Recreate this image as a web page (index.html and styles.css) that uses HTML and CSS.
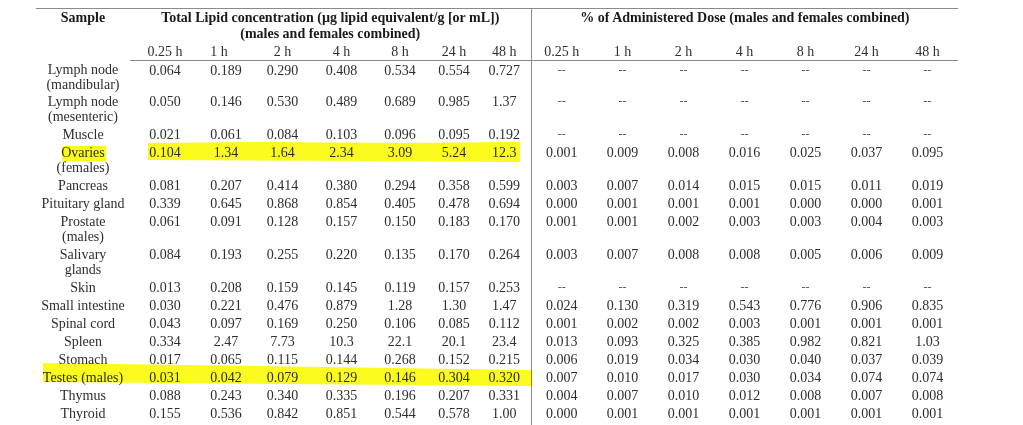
FILE: index.html
```html
<!DOCTYPE html>
<html>
<head>
<meta charset="utf-8">
<link rel="stylesheet" href="styles.css">
<title>Total Lipid concentration</title>
</head>
<body>
<div class="sheet">
<table class="data">
<colgroup>
<col class="c-sample">
<col class="c-a1"><col class="c-a2"><col class="c-a3"><col class="c-a4"><col class="c-a5"><col class="c-a6"><col class="c-a7">
<col class="c-b"><col class="c-b"><col class="c-b"><col class="c-b"><col class="c-b"><col class="c-b"><col class="c-b">
</colgroup>
<thead>
<tr class="h1">
<th rowspan="3" class="bold">Sample</th>
<th colspan="7" class="bold split">Total Lipid concentration (µg lipid equivalent/g [or mL])</th>
<th colspan="7" class="bold">% of Administered Dose (males and females combined)</th>
</tr>
<tr class="h2">
<th colspan="7" class="bold split">(males and females combined)</th>
<th colspan="7"></th>
</tr>
<tr class="h3">
<th>0.25 h</th><th class="shift">1 h</th><th>2 h</th><th>4 h</th><th>8 h</th><th>24 h</th><th class="split">48 h</th>
<th>0.25 h</th><th>1 h</th><th>2 h</th><th>4 h</th><th>8 h</th><th>24 h</th><th>48 h</th>
</tr>
</thead>
<tbody>
<tr class="first"><td>Lymph node<br>(mandibular)</td><td>0.064</td><td>0.189</td><td>0.290</td><td>0.408</td><td>0.534</td><td>0.554</td><td class="split">0.727</td><td class="na">--</td><td class="na">--</td><td class="na">--</td><td class="na">--</td><td class="na">--</td><td class="na">--</td><td class="na">--</td></tr>
<tr><td>Lymph node<br>(mesenteric)</td><td>0.050</td><td>0.146</td><td>0.530</td><td>0.489</td><td>0.689</td><td>0.985</td><td class="split">1.37</td><td class="na">--</td><td class="na">--</td><td class="na">--</td><td class="na">--</td><td class="na">--</td><td class="na">--</td><td class="na">--</td></tr>
<tr><td>Muscle</td><td>0.021</td><td>0.061</td><td>0.084</td><td>0.103</td><td>0.096</td><td>0.095</td><td class="split">0.192</td><td class="na">--</td><td class="na">--</td><td class="na">--</td><td class="na">--</td><td class="na">--</td><td class="na">--</td><td class="na">--</td></tr>
<tr><td>Ovaries<br>(females)</td><td>0.104</td><td>1.34</td><td>1.64</td><td>2.34</td><td>3.09</td><td>5.24</td><td class="split">12.3</td><td>0.001</td><td>0.009</td><td>0.008</td><td>0.016</td><td>0.025</td><td>0.037</td><td>0.095</td></tr>
<tr><td>Pancreas</td><td>0.081</td><td>0.207</td><td>0.414</td><td>0.380</td><td>0.294</td><td>0.358</td><td class="split">0.599</td><td>0.003</td><td>0.007</td><td>0.014</td><td>0.015</td><td>0.015</td><td>0.011</td><td>0.019</td></tr>
<tr><td>Pituitary gland</td><td>0.339</td><td>0.645</td><td>0.868</td><td>0.854</td><td>0.405</td><td>0.478</td><td class="split">0.694</td><td>0.000</td><td>0.001</td><td>0.001</td><td>0.001</td><td>0.000</td><td>0.000</td><td>0.001</td></tr>
<tr><td>Prostate<br>(males)</td><td>0.061</td><td>0.091</td><td>0.128</td><td>0.157</td><td>0.150</td><td>0.183</td><td class="split">0.170</td><td>0.001</td><td>0.001</td><td>0.002</td><td>0.003</td><td>0.003</td><td>0.004</td><td>0.003</td></tr>
<tr><td>Salivary<br>glands</td><td>0.084</td><td>0.193</td><td>0.255</td><td>0.220</td><td>0.135</td><td>0.170</td><td class="split">0.264</td><td>0.003</td><td>0.007</td><td>0.008</td><td>0.008</td><td>0.005</td><td>0.006</td><td>0.009</td></tr>
<tr><td>Skin</td><td>0.013</td><td>0.208</td><td>0.159</td><td>0.145</td><td>0.119</td><td>0.157</td><td class="split">0.253</td><td class="na">--</td><td class="na">--</td><td class="na">--</td><td class="na">--</td><td class="na">--</td><td class="na">--</td><td class="na">--</td></tr>
<tr><td>Small intestine</td><td>0.030</td><td>0.221</td><td>0.476</td><td>0.879</td><td>1.28</td><td>1.30</td><td class="split">1.47</td><td>0.024</td><td>0.130</td><td>0.319</td><td>0.543</td><td>0.776</td><td>0.906</td><td>0.835</td></tr>
<tr><td>Spinal cord</td><td>0.043</td><td>0.097</td><td>0.169</td><td>0.250</td><td>0.106</td><td>0.085</td><td class="split">0.112</td><td>0.001</td><td>0.002</td><td>0.002</td><td>0.003</td><td>0.001</td><td>0.001</td><td>0.001</td></tr>
<tr><td>Spleen</td><td>0.334</td><td>2.47</td><td>7.73</td><td>10.3</td><td>22.1</td><td>20.1</td><td class="split">23.4</td><td>0.013</td><td>0.093</td><td>0.325</td><td>0.385</td><td>0.982</td><td>0.821</td><td>1.03</td></tr>
<tr><td>Stomach</td><td>0.017</td><td>0.065</td><td>0.115</td><td>0.144</td><td>0.268</td><td>0.152</td><td class="split">0.215</td><td>0.006</td><td>0.019</td><td>0.034</td><td>0.030</td><td>0.040</td><td>0.037</td><td>0.039</td></tr>
<tr><td>Testes (males)</td><td>0.031</td><td>0.042</td><td>0.079</td><td>0.129</td><td>0.146</td><td>0.304</td><td class="split">0.320</td><td>0.007</td><td>0.010</td><td>0.017</td><td>0.030</td><td>0.034</td><td>0.074</td><td>0.074</td></tr>
<tr><td>Thymus</td><td>0.088</td><td>0.243</td><td>0.340</td><td>0.335</td><td>0.196</td><td>0.207</td><td class="split">0.331</td><td>0.004</td><td>0.007</td><td>0.010</td><td>0.012</td><td>0.008</td><td>0.007</td><td>0.008</td></tr>
<tr><td>Thyroid</td><td>0.155</td><td>0.536</td><td>0.842</td><td>0.851</td><td>0.544</td><td>0.578</td><td class="split">1.00</td><td>0.000</td><td>0.001</td><td>0.001</td><td>0.001</td><td>0.001</td><td>0.001</td><td>0.001</td></tr>
<tr class="tail"><td></td><td></td><td></td><td></td><td></td><td></td><td></td><td class="split"></td><td></td><td></td><td></td><td></td><td></td><td></td><td></td></tr>
</tbody>
</table>
<div class="mark mark-ovaries-word"></div>
<div class="mark mark-ovaries"></div>
<div class="mark mark-testes"></div>
</div>
</body>
</html>
```
FILE: styles.css
```css
html, body {
  margin: 0;
  background: #ffffff;
}
body {
  font-family: "Liberation Serif", "Times New Roman", serif;
  font-size: 14px;
  color: #2e2e2e;
  overflow: hidden;
}
.sheet {
  position: relative;
  padding: 8px 0 0 36px;
}
.data {
  border-collapse: collapse;
  table-layout: fixed;
  width: 922px;
}
.c-sample { width: 94px; }
.c-a1 { width: 70px; }
.c-a2 { width: 52px; }
.c-a3 { width: 61px; }
.c-a4 { width: 57px; }
.c-a5 { width: 60px; }
.c-a6 { width: 48px; }
.c-a7 { width: 53px; }
.c-b { width: 61px; }

.data th, .data td {
  padding: 0;
  text-align: center;
  vertical-align: top;
  white-space: nowrap;
  font-weight: normal;
}
.data thead th {
  line-height: 16px;
}
.data .bold {
  font-weight: bold;
  color: #1a1a1a;
}
.data .h1 th {
  border-top: 1px solid #8a8a8a;
  padding-top: 0.5px;
}
.data .h3 th {
  padding-top: 2px;
  padding-bottom: 0.5px;
  color: #2e2e2e;
  border-bottom: 1px solid #8a8a8a;
}
.data .h3 .shift {
  padding-right: 14px;
}
.data .split {
  border-right: 1px solid #8a8a8a;
}
.data tbody td {
  line-height: 15px;
  padding: 1.5px 0;
}
.data tbody tr.first td {
  padding-top: 1.5px;
  padding-bottom: 0.5px;
}
.data td.na {
  color: #555;
  font-size: 12px;
}
.data tr.tail td {
  height: 20px;
  padding: 0;
}

.mark {
  position: absolute;
  background: #fbfb1f;
  mix-blend-mode: multiply;
  pointer-events: none;
}
.mark-ovaries-word {
  left: 62px;
  top: 146px;
  width: 44px;
  height: 15px;
}
.mark-ovaries {
  left: 148px;
  top: 142px;
  width: 372px;
  height: 20px;
  clip-path: polygon(0 1px, 30% 0, 70% 1px, 100% 0, 100% 100%, 60% calc(100% - 1px), 0 calc(100% - 2px));
}
.mark-testes {
  left: 43px;
  top: 363px;
  width: 489px;
  height: 23px;
  clip-path: polygon(0 0, 100% 7px, 100% 100%, 0 19px);
}
```
